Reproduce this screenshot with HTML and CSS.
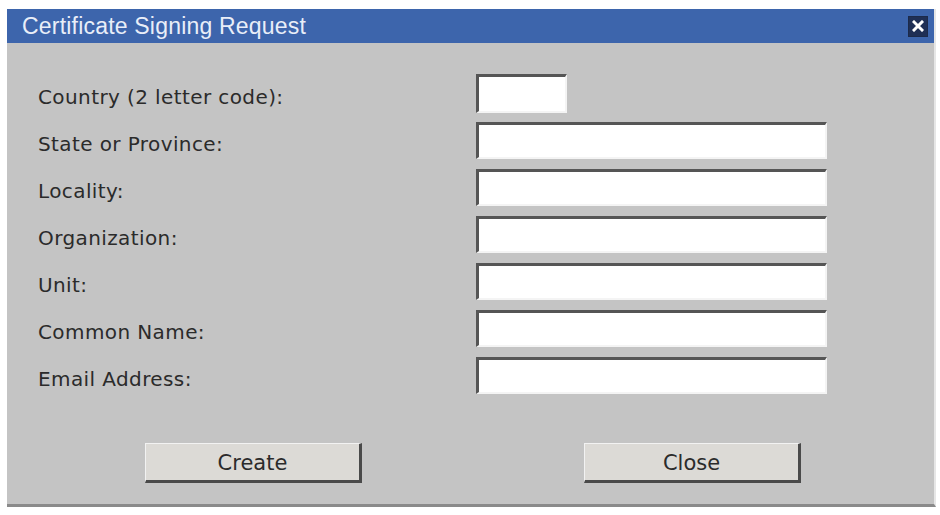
FILE: index.html
```html
<!DOCTYPE html>
<html lang="en">
<head>
    <meta charset="UTF-8">
    <title>Certificate Signing Request</title>
    <link rel="stylesheet" href="styles.css">
</head>
<body>
    <div class="dialog">
        <div class="titlebar">
            <span class="title">Certificate Signing Request</span>
            <button type="button" class="close-x" aria-label="Close">
                <svg width="12" height="12" viewBox="0 0 12 12">
                    <path d="M2 2 L10 10 M10 2 L2 10" stroke="#fff" stroke-width="3" stroke-linecap="square"/>
                </svg>
            </button>
        </div>
        <form class="csr-form">
            <div class="fields">
                <label for="country">Country (2 letter code):</label>
                <input type="text" id="country" class="short" maxlength="2">
                <label for="state">State or Province:</label>
                <input type="text" id="state">
                <label for="locality">Locality:</label>
                <input type="text" id="locality">
                <label for="org">Organization:</label>
                <input type="text" id="org">
                <label for="unit">Unit:</label>
                <input type="text" id="unit">
                <label for="cn">Common Name:</label>
                <input type="text" id="cn">
                <label for="email">Email Address:</label>
                <input type="text" id="email">
            </div>
            <div class="actions">
                <button type="button" class="btn">Create</button>
                <button type="button" class="btn">Close</button>
            </div>
        </form>
    </div>
</body>
</html>
```

FILE: styles.css
```css
body {
    margin: 0;
    background-color: #fff;
}
.dialog {
    margin: 9px 0 0 7px;
    width: 929px;
    height: 498px;
    background-color: #c4c4c4;
    border-right: 2px solid #e6e6e6;
    border-bottom: 3px solid #8a8a8a;
    box-sizing: border-box;
}
.titlebar {
    height: 34px;
    background-color: #3d65ac;
    display: flex;
    align-items: center;
    justify-content: space-between;
    padding: 0 6px 0 15px;
}
.title {
    font-family: "Liberation Sans", Arial, sans-serif;
    font-size: 23px;
    letter-spacing: 0.2px;
    color: #e9eef8;
}
.close-x {
    width: 20px;
    height: 21px;
    padding: 0;
    border: 1px solid #1c2a4a;
    background-color: #1f2f55;
    display: flex;
    align-items: center;
    justify-content: center;
}
.csr-form {
    font-family: "DejaVu Sans", Tahoma, sans-serif;
    color: #2b2b2b;
}
.fields {
    display: grid;
    grid-template-columns: 438px 351px;
    grid-auto-rows: 47px;
    align-items: center;
    padding: 27px 0 0 31px;
}
.fields label {
    font-size: 20px;
    letter-spacing: 0.4px;
    padding-top: 6px;
}
.fields input {
    height: 37px;
    margin: 0;
    padding: 0 4px;
    box-sizing: border-box;
    background-color: #fff;
    border-style: solid;
    border-width: 3px 2px 2px 3px;
    border-color: #555 #f4f4f4 #f4f4f4 #555;
    font: inherit;
}
.fields input.short {
    width: 91px;
    height: 39px;
}
.actions {
    display: flex;
    padding: 44px 0 0 138px;
    gap: 222px;
}
.btn {
    width: 217px;
    height: 40px;
    background-color: #dcdad6;
    border-style: solid;
    border-width: 1px 3px 3px 1px;
    border-color: #f2f2f2 #4a4a4a #4a4a4a #f2f2f2;
    font-family: "DejaVu Sans", Tahoma, sans-serif;
    font-size: 21px;
    color: #2b2b2b;
    padding: 2px 0 0;
}
```
